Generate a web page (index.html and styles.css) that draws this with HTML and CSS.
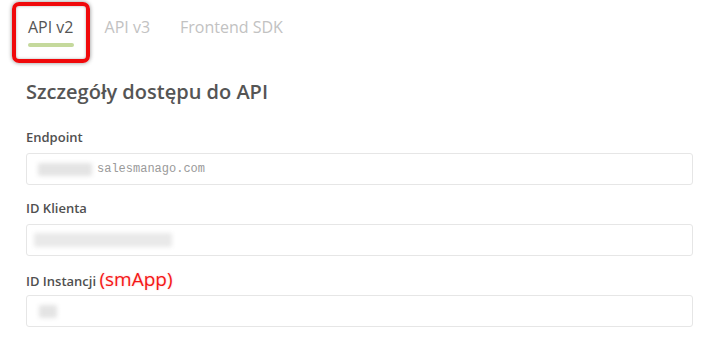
FILE: index.html
```html
<!DOCTYPE html>
<html lang="pl">
<head>
<meta charset="utf-8">
<title>API</title>
<link rel="stylesheet" href="styles.css">
</head>
<body>
<div class="page">
  <nav class="tabs">
    <div class="tab active">API v2<span class="marker"></span></div>
    <div class="tab">API v3</div>
    <div class="tab">Frontend SDK</div>
  </nav>
  <h2 class="heading">Szczegóły dostępu do API</h2>
  <div class="field">
    <label class="label">Endpoint</label>
    <div class="input"><span class="blur blur-endpoint"></span><span class="mono">salesmanago.com</span></div>
  </div>
  <div class="field">
    <label class="label">ID Klienta</label>
    <div class="input"><span class="blur blur-client"></span></div>
  </div>
  <div class="field">
    <label class="label">ID Instancji <span class="note">(smApp)</span></label>
    <div class="input"><span class="blur blur-instance"></span></div>
  </div>
</div>
</body>
</html>
```
FILE: styles.css
```css
*, *::before, *::after { box-sizing: border-box; }
html, body { margin: 0; padding: 0; background: #fff; }
body { font-family: "Open Sans", "Noto Sans", sans-serif; color: #555; width: 709px; height: 343px; overflow: hidden; }
.page { padding: 16px 16px 0 26px; }
.tabs { display: flex; position: relative; height: 48px; }
.tab { position: relative; font-size: 16px; line-height: 22px; color: #c2c2c2; padding: 0 15px; }
.tab:first-child { padding-left: 2px; padding-right: 16px; }
.tab.active { color: #555; }
.tab .marker { position: absolute; left: 2px; right: 16px; top: 27px; height: 4px; border-radius: 2px; background: #c5d99c; }
.tab.active::after {
  content: ""; position: absolute; left: -14px; top: -14px; width: 78px; height: 61px;
  border: 4px solid #f0090b; border-radius: 7px;
  box-shadow: 0 0 4px rgba(0,0,0,0.45), inset 0 0 3px rgba(0,0,0,0.3);
}
.heading { margin: 16px 0 24px; font-size: 20px; line-height: 24px; font-weight: 600; color: #555; }
.field { display: flex; flex-direction: column; gap: 7px; margin-bottom: 14px; }
.label { font-size: 13px; line-height: 18px; height: 18px; font-weight: 600; color: #505050; white-space: nowrap; }
.note { font-size: 19px; line-height: 18px; font-weight: 400; color: #f41616; text-shadow: 0 0 2px rgba(255,0,0,0.25); }
.input { height: 32px; border: 1px solid #e6e6e6; border-radius: 3px; display: flex; align-items: center; padding-left: 9px; }
.blur { display: inline-block; height: 13px; background: #e4e4e4; filter: blur(2px); border-radius: 2px; }
.blur-endpoint { width: 54px; margin-left: 2px; margin-right: 5px; }
.blur-client { width: 138px; height: 14px; margin-left: -2px; background: #e9e9e9; }
.blur-instance { width: 18px; margin-left: 3px; }
.mono { font-family: "Liberation Mono", "DejaVu Sans Mono", monospace; font-size: 12px; color: #9a9a9a; }
```
